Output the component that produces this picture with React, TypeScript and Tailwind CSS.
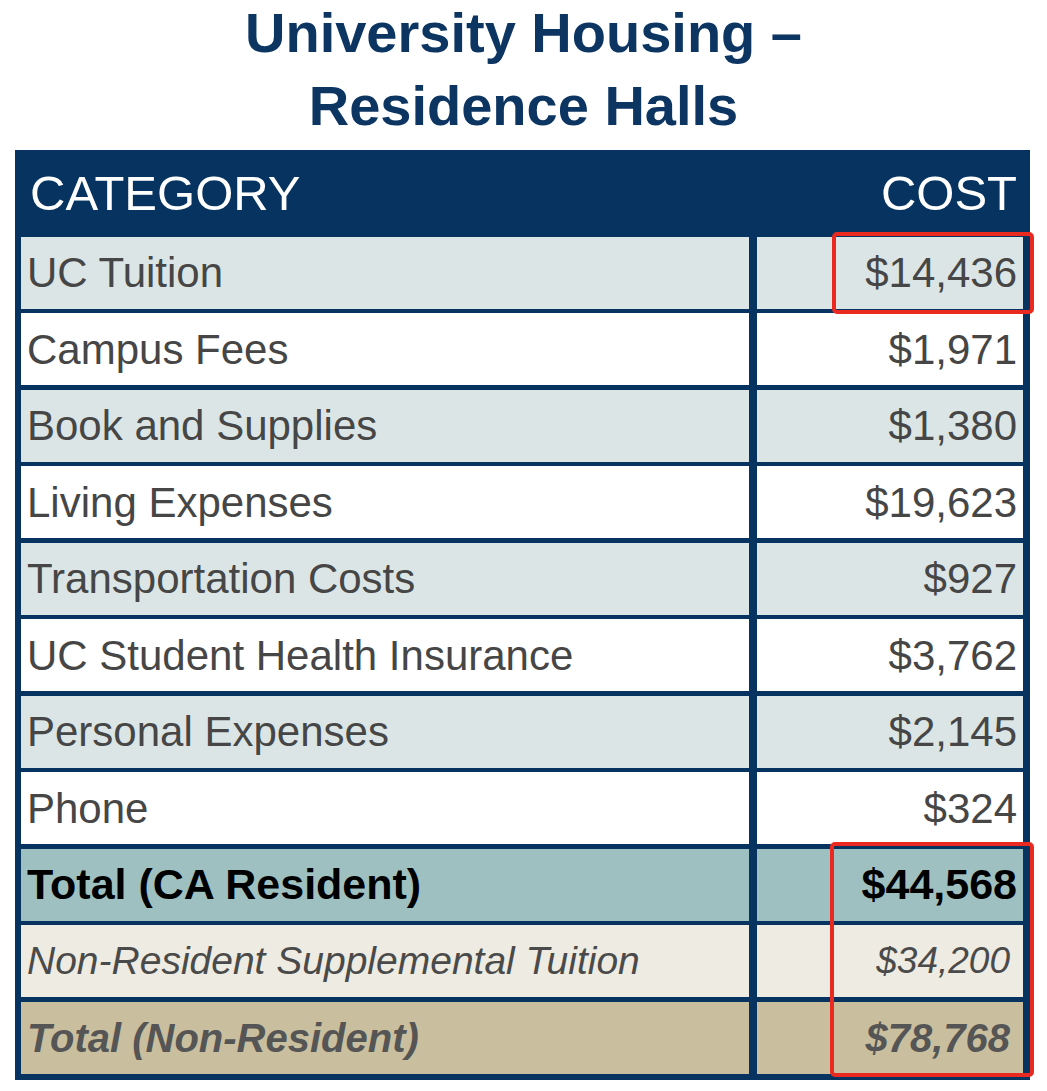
const rows = [
  { label: "UC Tuition", cost: "$14,436", bg: "bg-[#dbe5e5]" },
  { label: "Campus Fees", cost: "$1,971", bg: "bg-white" },
  { label: "Book and Supplies", cost: "$1,380", bg: "bg-[#dbe5e5]" },
  { label: "Living Expenses", cost: "$19,623", bg: "bg-white" },
  { label: "Transportation Costs", cost: "$927", bg: "bg-[#dbe5e5]" },
  { label: "UC Student Health Insurance", cost: "$3,762", bg: "bg-white" },
  { label: "Personal Expenses", cost: "$2,145", bg: "bg-[#dbe5e5]" },
  { label: "Phone", cost: "$324", bg: "bg-white" },
]

export default function App() {
  return (
    <div className="w-[1047px] bg-white font-['Liberation_Sans',Arial,sans-serif]">
      {/* Title */}
      <h1 className="-mt-[4px] mb-[8px] text-center text-[56px] font-bold leading-[73px] text-[#0c3562]">
        University Housing –<br />
        Residence Halls
      </h1>

      {/* Table */}
      <div className="relative ml-[15px] w-[1015px] bg-[#06335f] pl-[6px] pr-[7px] pb-[6px]">
        <div className="grid grid-cols-[728px_266px] gap-x-[8px] gap-y-[4.5px]">
          <div className="col-span-2 flex h-[82px] items-center justify-between pt-[6px] text-[49px] text-white">
            <span className="pl-[9px]">CATEGORY</span>
            <span className="pr-[6px]">COST</span>
          </div>

          {rows.map((r) => (
            <div key={r.label} className="contents">
              <div className={`${r.bg} flex h-[72px] items-center pl-[6px] text-[42px] text-[#464646]`}>
                {r.label}
              </div>
              <div className={`${r.bg} flex h-[72px] items-center justify-end pr-[6px] text-[42px] text-[#464646]`}>
                {r.cost}
              </div>
            </div>
          ))}

          {/* Total CA resident */}
          <div className="flex h-[72px] items-center bg-[#9fc0c1] pl-[6px] text-[43px] font-bold text-black">
            Total (CA Resident)
          </div>
          <div className="flex h-[72px] items-center justify-end bg-[#9fc0c1] pr-[6px] text-[43px] font-bold text-black">
            $44,568
          </div>

          {/* Non-resident supplemental */}
          <div className="flex h-[72px] items-center bg-[#edebe2] pl-[6px] text-[39px] italic text-[#4a4a4a]">
            Non-Resident Supplemental Tuition
          </div>
          <div className="flex h-[72px] items-center justify-end bg-[#edebe2] pr-[13px] text-[37px] italic text-[#4a4a4a]">
            $34,200
          </div>

          {/* Total non-resident */}
          <div className="flex h-[72px] items-center bg-[#c9bf9f] pl-[6px] text-[40px] font-bold italic text-[#555555]">
            Total (Non-Resident)
          </div>
          <div className="flex h-[72px] items-center justify-end bg-[#c9bf9f] pr-[13px] text-[40px] font-bold italic text-[#555555]">
            $78,768
          </div>
        </div>

        {/* red highlight boxes */}
        <div className="pointer-events-none absolute left-[817px] top-[82px] h-[82px] w-[202px] rounded-[5px] border-[4px] border-[#ea2a20]" />
        <div className="pointer-events-none absolute left-[815px] top-[692px] h-[235px] w-[204px] rounded-[5px] border-[4px] border-[#ea2a20]" />
      </div>
    </div>
  )
}
